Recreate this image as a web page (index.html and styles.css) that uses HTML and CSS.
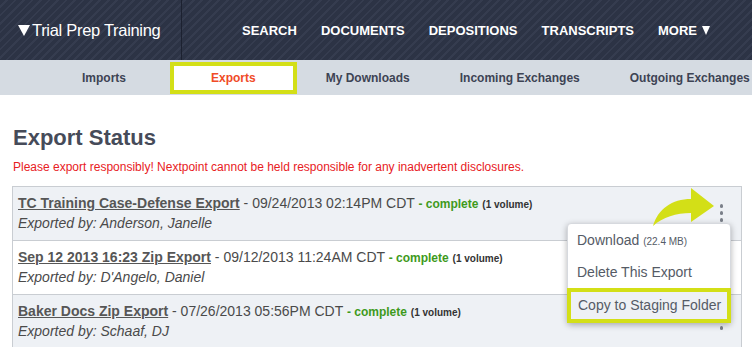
FILE: index.html
```html
<!DOCTYPE html>
<html lang="en">

<head>
    <meta charset="UTF-8" />
    <meta name="viewport" content="width=device-width, initial-scale=1.0" />
    <title>Export Status</title>
    <link rel="stylesheet" href="styles.css">
</head>

<body>
    <header class="topbar">
        <div class="case-title"><span class="caret"></span>Trial Prep Training</div>
        <nav class="main-nav">
            <a href="#">Search</a>
            <a href="#">Documents</a>
            <a href="#">Depositions</a>
            <a href="#">Transcripts</a>
            <a href="#">More <span class="more-caret"></span></a>
        </nav>
    </header>

    <nav class="sub-nav">
        <a href="#" class="tab">Imports</a>
        <a href="#" class="tab active">Exports</a>
        <a href="#" class="tab">My Downloads</a>
        <a href="#" class="tab">Incoming Exchanges</a>
        <a href="#" class="tab">Outgoing Exchanges</a>
    </nav>

    <main class="content">
        <h1>Export Status</h1>
        <p class="warning">Please export responsibly! Nextpoint cannot be held responsible for any inadvertent disclosures.</p>

        <div class="export-list">
            <div class="export-row">
                <div class="export-info">
                    <div class="export-line"><a href="#">TC Training Case-Defense Export</a> - 09/24/2013 02:14PM CDT <span class="status">- complete</span> <span class="volumes">(1 volume)</span></div>
                    <div class="exported-by">Exported by: Anderson, Janelle</div>
                </div>
                <span class="row-menu"><i></i><i></i><i></i></span>
            </div>
            <div class="export-row">
                <div class="export-info">
                    <div class="export-line"><a href="#">Sep 12 2013 16:23 Zip Export</a> - 09/12/2013 11:24AM CDT <span class="status">- complete</span> <span class="volumes">(1 volume)</span></div>
                    <div class="exported-by">Exported by: D'Angelo, Daniel</div>
                </div>
                <span class="row-menu"><i></i><i></i><i></i></span>
            </div>
            <div class="export-row">
                <div class="export-info">
                    <div class="export-line"><a href="#">Baker Docs Zip Export</a> - 07/26/2013 05:56PM CDT <span class="status">- complete</span> <span class="volumes">(1 volume)</span></div>
                    <div class="exported-by">Exported by: Schaaf, DJ</div>
                </div>
                <span class="row-menu"><i></i><i></i><i></i></span>
            </div>

            <!-- callout arrow pointing at the row menu -->
            <svg class="callout-arrow" width="70" height="42" viewBox="0 0 70 42">
                <path d="M4 40 C 9 23, 23 13, 42 13 L42 2 L65 20 L42 36 L42 27 C 27 27, 14 31, 4 40 Z" fill="#d3df17" />
            </svg>

            <ul class="dropdown">
                <li>Download <small>(22.4 MB)</small></li>
                <li>Delete This Export</li>
                <li class="highlight">Copy to Staging Folder</li>
            </ul>
        </div>
    </main>
</body>

</html>
```

FILE: styles.css
```css
html,
body {
    margin: 0;
    padding: 0;
}

body {
    font-family: "Liberation Sans", Arial, sans-serif;
    background-color: white;
    width: 752px;
    overflow: hidden;
}

a {
    text-decoration: none;
    color: inherit;
}

/* top bar */

.topbar {
    display: flex;
    height: 60px;
    background-color: #2c3345;
    background-image: repeating-linear-gradient(135deg, #2c3345 0, #2c3345 4px, #353c4f 4px, #353c4f 6px);
    color: white;
}

.case-title {
    width: 182px;
    flex-shrink: 0;
    border-right: 1px solid #1c2130;
    display: flex;
    align-items: center;
    padding-left: 18px;
    box-sizing: border-box;
    font-size: 16.5px;
    letter-spacing: -0.3px;
}

.caret {
    width: 0;
    height: 0;
    border-left: 6.5px solid transparent;
    border-right: 6.5px solid transparent;
    border-top: 11px solid white;
    margin: 1px 2px 0 0;
}

.main-nav {
    display: flex;
    align-items: center;
    gap: 24px;
    padding-left: 60px;
    white-space: nowrap;
}

.main-nav a {
    display: flex;
    align-items: center;
    font-size: 13px;
    font-weight: bold;
    text-transform: uppercase;
}

.more-caret {
    width: 0;
    height: 0;
    border-left: 4.5px solid transparent;
    border-right: 4.5px solid transparent;
    border-top: 9px solid white;
    margin-left: 5px;
}

/* sub nav */

.sub-nav {
    display: flex;
    align-items: center;
    height: 35px;
    background-color: #d5dbe2;
    padding-left: 57px;
    white-space: nowrap;
}

.tab {
    flex-shrink: 0;
    font-size: 12px;
    font-weight: bold;
    color: #3d4354;
    padding: 0 25px;
}

.tab.active {
    box-sizing: border-box;
    height: 32px;
    line-height: 24px;
    margin: 1px 4px 0 19px;
    padding: 0 37px;
    border: 4px solid #d3df17;
    background-color: white;
    color: #f04b27;
}

/* content */

.content {
    padding: 0 10px 0 12px;
}

h1 {
    margin: 30px 0 0 1px;
    font-size: 22px;
    line-height: 26px;
    color: #464b59;
}

.warning {
    margin: 8px 0 11px 1px;
    font-size: 12px;
    line-height: 16px;
    color: #e8201e;
}

.export-list {
    position: relative;
    border: 1px solid #c9cdd2;
    border-top: none;
}

.export-row {
    display: flex;
    justify-content: space-between;
    align-items: center;
    border-top: 1px solid #c9cdd2;
    padding: 8px 18px 9px 5px;
    height: 36px;
    background-color: #eef1f5;
}

.export-row:nth-child(2) {
    background-color: white;
}

.export-line,
.exported-by {
    font-size: 14px;
    line-height: 18px;
    color: #4a4a4a;
    white-space: nowrap;
}

.export-line a {
    font-weight: bold;
    color: #565656;
    text-decoration: underline;
}

.exported-by {
    font-style: italic;
}

.status {
    font-size: 12px;
    font-weight: bold;
    color: #3e9a1c;
}

.volumes {
    font-size: 10px;
    font-weight: bold;
    color: #333;
}

.row-menu {
    display: flex;
    flex-direction: column;
    gap: 3.5px;
}

.row-menu i {
    display: block;
    width: 3.5px;
    height: 3.5px;
    border-radius: 50%;
    background-color: #7b808a;
}

/* overlays */

.callout-arrow {
    position: absolute;
    left: 636px;
    top: 0;
    z-index: 3;
}

.dropdown {
    position: absolute;
    left: 554px;
    top: 37px;
    width: 164px;
    box-sizing: border-box;
    margin: 0;
    padding: 1px 0 0;
    list-style: none;
    background-color: white;
    border: 1px solid #d6d9de;
    border-radius: 4px;
    box-shadow: 0 2px 6px rgba(0, 0, 0, 0.3);
    z-index: 2;
}

.dropdown li {
    font-size: 14px;
    line-height: 17px;
    padding: 7px 9px;
    color: #555b66;
    white-space: nowrap;
}

.dropdown small {
    font-size: 10px;
}

.dropdown li.highlight {
    margin: 0 -1px -1px;
    padding: 5px 7px;
    border: 4px solid #d3df17;
    background-color: #eef1f5;
}
```
